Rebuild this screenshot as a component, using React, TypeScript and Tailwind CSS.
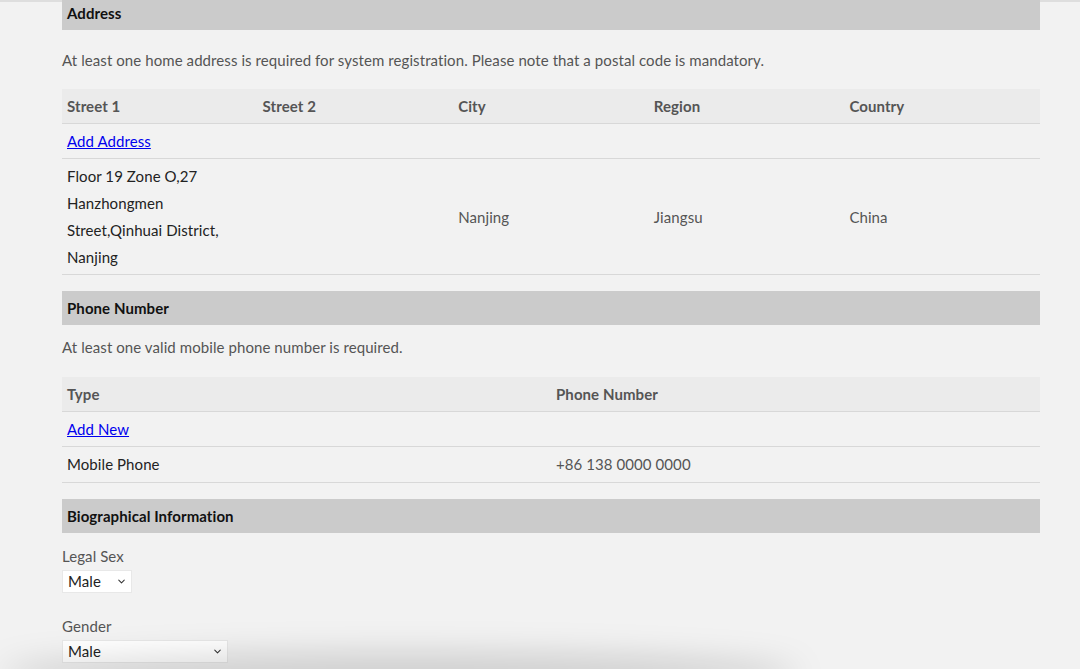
import { ChevronDown } from 'lucide-react';

const font = { fontFamily: 'Lato, "Open Sans", sans-serif' };

function SectionHeader({ title, className = '' }: { title: string; className?: string }) {
  return (
    <div className={`flex h-[34px] items-center bg-[#cbcbcb] px-[5px] text-[15px] font-bold text-[#111] ${className}`}>
      {title}
    </div>
  );
}

function Select({ value, width }: { value: string; width: string }) {
  return (
    <div className={`relative flex h-[23px] items-center border border-[#e8e8e8] bg-white pl-[5px] text-[15px] text-[#222] ${width}`}>
      {value}
      <ChevronDown className="absolute right-[4px] top-[5px] h-[11px] w-[11px] text-[#333]" strokeWidth={2.2} />
    </div>
  );
}

export default function App() {
  const addressCols = ['Street 1', 'Street 2', 'City', 'Region', 'Country'];

  return (
    <div className="relative h-[669px] overflow-hidden bg-[#f2f2f2] tracking-[0.08px]" style={font}>
      <div className="h-[2px] bg-[#dedede]" />
      <div className="mx-[62px] w-[978px]">
        <SectionHeader title="Address" className="-mt-[6px]" />
        <p className="mt-[20px] text-[15px] leading-[20px] text-[#555]">
          At least one home address is required for system registration. Please note that a postal code is mandatory.
        </p>

        <div className="mt-[19px]">
          <div className="grid h-[35px] grid-cols-5 items-center border-b border-[#d8d8d8] bg-[#ebebeb] text-[15px] font-bold text-[#555]">
            {addressCols.map((c) => (
              <div key={c} className="px-[5px]">{c}</div>
            ))}
          </div>
          <div className="flex h-[35px] items-center border-b border-[#d8d8d8] px-[5px] text-[15px]">
            <a href="#" className="text-[#0000ee] underline">Add Address</a>
          </div>
          <div className="grid grid-cols-5 items-center border-b border-[#d8d8d8] pt-[4px] pb-[3px] text-[15px] leading-[27px]">
            <div className="px-[5px] text-[#222]">
              Floor 19 Zone O,27 Hanzhongmen Street,Qinhuai District, Nanjing
            </div>
            <div className="px-[5px]" />
            <div className="px-[5px] text-[#555]">Nanjing</div>
            <div className="px-[5px] text-[#555]">Jiangsu</div>
            <div className="px-[5px] text-[#555]">China</div>
          </div>
        </div>

        <SectionHeader title="Phone Number" className="mt-[16px]" />
        <p className="mt-[12px] text-[15px] leading-[20px] text-[#555]">
          At least one valid mobile phone number is required.
        </p>

        <div className="mt-[20px]">
          <div className="grid h-[35px] grid-cols-2 items-center border-b border-[#d8d8d8] bg-[#ebebeb] text-[15px] font-bold text-[#555]">
            <div className="px-[5px]">Type</div>
            <div className="px-[5px]">Phone Number</div>
          </div>
          <div className="flex h-[35px] items-center border-b border-[#d8d8d8] px-[5px] text-[15px]">
            <a href="#" className="text-[#0000ee] underline">Add New</a>
          </div>
          <div className="grid h-[36px] grid-cols-2 items-center border-b border-[#d8d8d8] text-[15px]">
            <div className="px-[5px] text-[#222]">Mobile Phone</div>
            <div className="px-[5px] text-[#555]">+86 138 0000 0000</div>
          </div>
        </div>

        <SectionHeader title="Biographical Information" className="mt-[16px]" />

        <div className="mt-[13px] text-[15px] leading-[20px] text-[#555]">Legal Sex</div>
        <div className="mt-[4px]">
          <Select value="Male" width="w-[70px]" />
        </div>

        <div className="mt-[23px] text-[15px] leading-[20px] text-[#555]">Gender</div>
        <div className="mt-[4px]">
          <Select value="Male" width="w-[166px]" />
        </div>
      </div>

      <div className="pointer-events-none absolute -bottom-[26px] left-[0px] h-[42px] w-[800px] rounded-[50%] bg-black/15 blur-lg" />
    </div>
  );
}
